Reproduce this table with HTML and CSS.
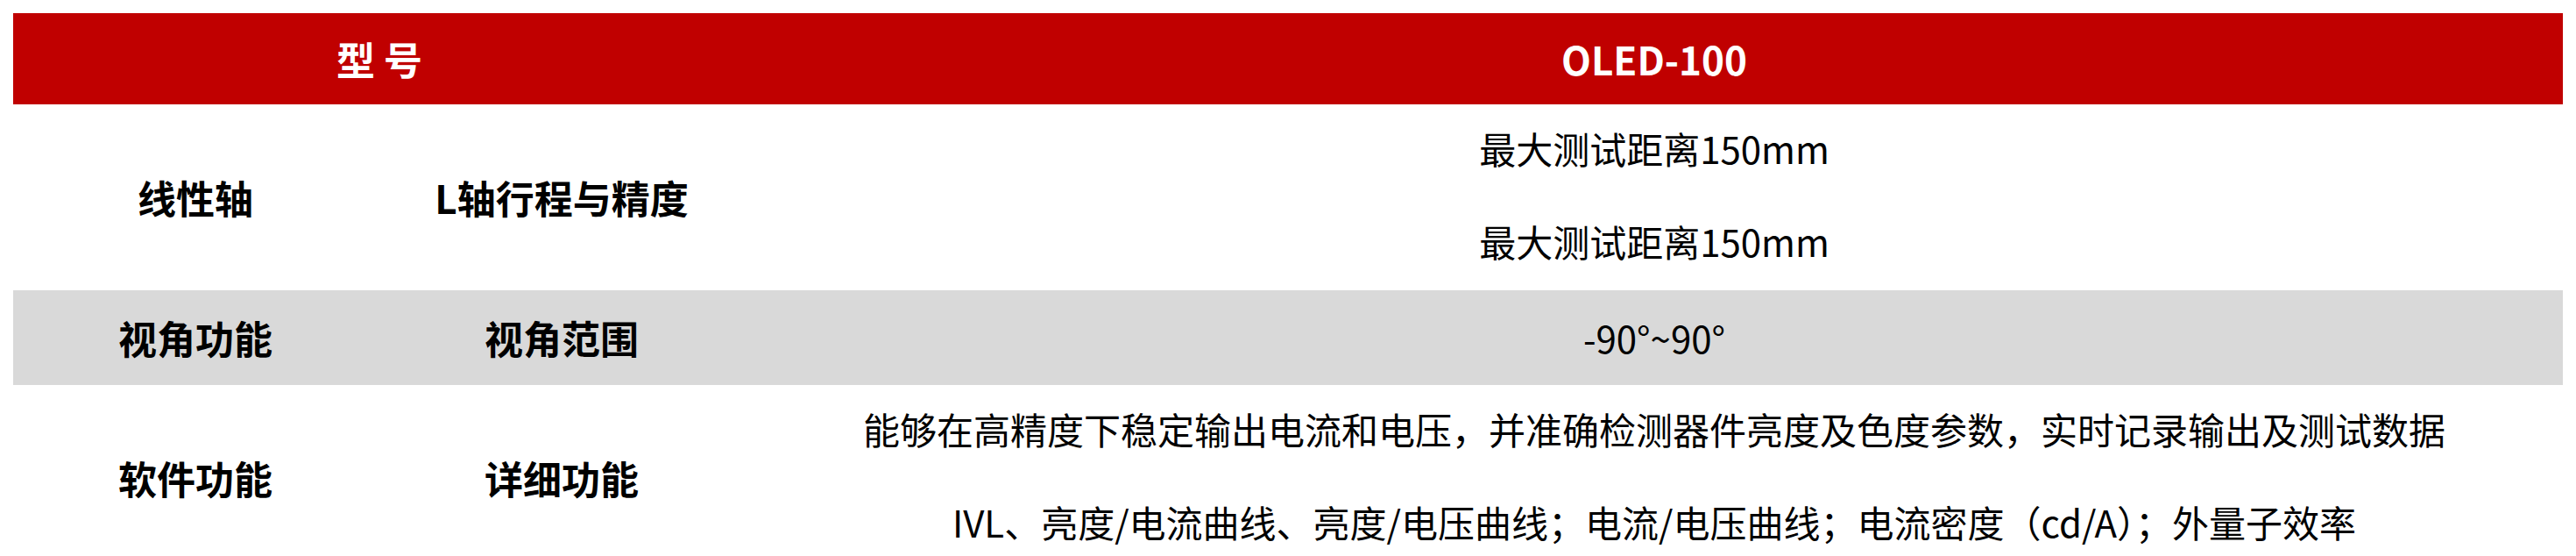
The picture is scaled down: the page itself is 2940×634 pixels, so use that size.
FILE: index.html
```html
<!DOCTYPE html>
<html lang="zh-CN">
<head>
<meta charset="utf-8">
<title>OLED-100</title>
<link rel="stylesheet" href="styles.css">
</head>
<body>
<table class="spec">
  <colgroup>
    <col class="c1">
    <col class="c2">
    <col class="c3">
  </colgroup>
  <thead>
    <tr class="head">
      <th colspan="2">型&nbsp;号</th>
      <th>OLED-100</th>
    </tr>
  </thead>
  <tbody>
    <tr class="row tall">
      <td class="label">线性轴</td>
      <td class="label">L轴行程与精度</td>
      <td class="value">
        <div class="line">最大测试距离150mm</div>
        <div class="line">最大测试距离150mm</div>
      </td>
    </tr>
    <tr class="row short gray">
      <td class="label">视角功能</td>
      <td class="label">视角范围</td>
      <td class="value">-90°~90°</td>
    </tr>
    <tr class="row tall">
      <td class="label">软件功能</td>
      <td class="label">详细功能</td>
      <td class="value">
        <div class="line">能够在高精度下稳定输出电流和电压，并准确检测器件亮度及色度参数，实时记录输出及测试数据</div>
        <div class="line">IVL、亮度/电流曲线、亮度/电压曲线；电流/电压曲线；电流密度（cd/A）；外量子效率</div>
      </td>
    </tr>
  </tbody>
</table>
</body>
</html>
```

FILE: styles.css
```css
html, body {
  margin: 0;
  padding: 0;
  background: #ffffff;
}

body {
  padding: 15px 15px 0 15px;
  font-family: "Noto Sans CJK SC", "Noto Sans", sans-serif;
  font-size: 44px;
  color: #000000;
}

.spec {
  width: 2910px;
  border-collapse: collapse;
  border-spacing: 0;
  table-layout: fixed;
}

.c1 { width: 416px; }
.c2 { width: 420px; }
.c3 { width: 2074px; }

.spec th,
.spec td {
  padding: 0;
  text-align: center;
  vertical-align: middle;
}

.head {
  background: #c00000;
  color: #ffffff;
  height: 104px;
}

.head th {
  font-weight: 700;
  line-height: 102px;
}

.tall {
  height: 212px;
}

.short {
  height: 108px;
}

.gray {
  background: #d9d9d9;
}

.label {
  font-weight: 700;
}

.value {
  font-weight: 400;
  font-size: 42px;
}

.tall .value {
  vertical-align: top;
}

.line {
  line-height: 106px;
  white-space: nowrap;
}

.line:first-child {
  margin-top: -3px;
}

.short .value {
  line-height: 104px;
}
```
